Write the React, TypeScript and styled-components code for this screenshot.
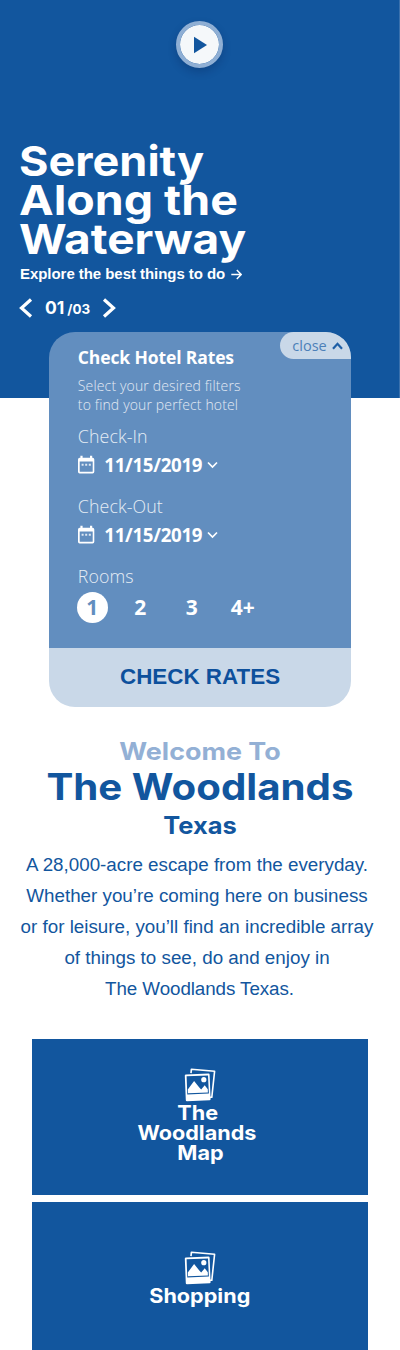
import React from "react";
import styled, { createGlobalStyle } from "styled-components";

const blue = "#12569e";
const mid = "#628ebf";
const pale = "#c9d8e8";
const display = `"Inter", "Liberation Sans", sans-serif`;
const humanist = `"Open Sans", "Noto Sans", sans-serif`;
const grotesque = `"Liberation Sans", Arial, sans-serif`;

const GlobalStyle = createGlobalStyle`
  * { box-sizing: border-box; }
  body { margin: 0; background: #fff; }
  button { border: 0; padding: 0; background: none; font: inherit; color: inherit; }
  svg { display: block; flex: none; }
`;

const Page = styled.main`
  width: 400px;
  height: 1350px;
  overflow: hidden;
  background: #fff;
`;

const Hero = styled.section`
  height: 398px;
  padding: 21px 0 0 19px;
  background: ${blue};
  border-right: 1px solid #3a71ad;
  color: #fff;
`;

const PlayButton = styled.button`
  display: flex;
  align-items: center;
  justify-content: center;
  width: 47px;
  height: 47px;
  margin: 0 0 0 157.3px;
  border: 4px solid #8fafd4;
  border-radius: 50%;
  background: #f5f8fa;
  background-clip: padding-box;
  box-shadow: 0 4px 9px rgba(0, 20, 60, 0.22);
`;

const HeroTitle = styled.h1`
  margin: 74px 0 0;
  font: 700 41.5px/39px ${display};
`;

const Line = styled.span<{ $stretch?: number; $from?: string }>`
  display: block;
  white-space: nowrap;
  transform: ${(p) => (p.$stretch ? `scaleX(${p.$stretch})` : "none")};
  transform-origin: ${(p) => p.$from ?? "center"};
`;

const HeroLink = styled.a`
  display: flex;
  align-items: center;
  gap: 6px;
  margin-top: 5px;
  padding-left: 1px;
  font: 700 15px/20px ${grotesque};
  letter-spacing: -0.05px;
`;

const Pager = styled.nav`
  display: flex;
  align-items: center;
  height: 24px;
  margin-top: 12px;
`;

const PageNow = styled.span`
  margin-left: 12px;
  font: 700 17.5px/24px ${display};
`;

const PageTotal = styled.span`
  margin: 1px 12px 0 3px;
  font: 700 13.4px/24px ${display};
`;

const RatesCard = styled.section`
  display: flex;
  flex-direction: column;
  position: relative;
  width: 301.5px;
  height: 375px;
  margin: -66.5px 0 0 49.3px;
  color: #fff;
`;

const CardBody = styled.div`
  height: 316.5px;
  padding: 15px 0 0 28.5px;
  border-radius: 26px 26px 0 0;
  background: ${mid};
`;

const CloseTab = styled.button`
  position: absolute;
  top: 0;
  right: 0;
  display: flex;
  align-items: center;
  gap: 5px;
  width: 70.5px;
  height: 27.5px;
  padding: 2px 0 0 12px;
  border-radius: 14px 26px 0 14px;
  background: ${pale};
  color: #4c80b8;
  font: 400 14.5px/26px ${humanist};
`;

const CardTitle = styled.h2`
  margin: 0;
  font: 700 17.5px/20px ${humanist};
  letter-spacing: -0.12px;
`;

const CardHint = styled.p`
  margin: 9px 0 0;
  color: #e2eaf4;
  font: 300 14px/19px ${humanist};
  letter-spacing: 0.15px;
`;

const Field = styled.div<{ $top: number }>`
  margin-top: ${(p) => p.$top}px;
`;

const Label = styled.div`
  color: #e6edf5;
  font: 300 17.8px/24px ${humanist};
  letter-spacing: 0.1px;
`;

const DateRow = styled.button`
  display: flex;
  align-items: center;
  height: 24px;
  margin-top: 5px;
`;

const DateText = styled.span`
  margin: 0 5px 0 9.5px;
  font: 700 18.7px/24px ${humanist};
  letter-spacing: -0.3px;
`;

const RoomRow = styled.div`
  display: flex;
  align-items: center;
  height: 31px;
  margin: 4px 0 0 -1px;
`;

const Room = styled.button<{ $active?: boolean; $width: number }>`
  width: ${(p) => p.$width}px;
  height: 31px;
  border-radius: 16px;
  background: ${(p) => (p.$active ? "#fff" : "transparent")};
  color: ${(p) => (p.$active ? mid : "#fff")};
  font: 700 21px/31px ${humanist};
  text-align: center;
`;

const CheckButton = styled.button`
  flex: 1;
  border-radius: 0 0 26px 26px;
  background: ${pale};
  color: #0d509c;
  font: 700 22.4px/58px ${grotesque};
`;

const Intro = styled.section`
  padding-top: 31px;
  text-align: center;
  color: ${blue};
`;

const Welcome = styled.div`
  color: #93b0d5;
  font: 700 24px/28px ${display};
`;

const Place = styled.h2`
  margin: 0;
  font: 700 36.6px/43px ${display};
`;

const State = styled.div`
  margin-top: 2px;
  font: 700 24px/30px ${display};
`;

const Copy = styled.p`
  margin: 8px 6px 0 0;
  font: 400 18.8px/31.2px ${grotesque};
`;

const LastLine = styled(Line)`
  padding-left: 5px;
  letter-spacing: -0.08px;
`;

const Tiles = styled.section`
  display: flex;
  flex-direction: column;
  gap: 7px;
  margin: 34px 32.3px 0;
`;

const Tile = styled.a<{ $top: number }>`
  display: flex;
  flex-direction: column;
  align-items: center;
  height: 156px;
  padding-top: ${(p) => p.$top}px;
  background: ${blue};
  color: #fff;
  font: 700 20px/20px ${display};
  text-align: center;
`;

const TileWord = styled(Line)<{ $trail?: boolean }>`
  padding-right: ${(p) => (p.$trail ? 5 : 0)}px;
`;

const Chevron = ({ d, w, h, s, color = "#fff" }: { d: string; w: number; h: number; s: number; color?: string }) => (
  <svg width={w} height={h} viewBox={`0 0 ${w} ${h}`} fill="none" stroke={color} strokeWidth={s}>
    <path d={d} />
  </svg>
);

const CalendarIcon = () => (
  <svg width="17" height="19" viewBox="0 0 17 19">
    <path d="M2.4 .7h2.2v2h7.4v-2h2.2v2H14.6a1.7 1.7 0 0 1 1.7 1.7v12.4a1.7 1.7 0 0 1-1.7 1.7H1.7A1.7 1.7 0 0 1 0 16.8V4.4A1.7 1.7 0 0 1 1.7 2.7h.7zM1.7 6.6v9.7q0 .5.5.5h12q.5 0 .5-.5V6.6z" fill="#fff" fillRule="evenodd" />
    <path d="M3.6 8.7h2v2H3.6zM7.2 8.7h2v2h-2zM10.8 8.7h2v2h-2z" fill="#dfe8f2" />
  </svg>
);

const PhotosIcon = () => (
  <svg width="32" height="35" viewBox="0 0 32 35">
    <path d="M7 5.2 7.4 1.2 30.6 3.2 27.8 29.3 26 29.2" fill="none" stroke="#fff" strokeWidth="1.6" strokeLinejoin="round" />
    <path d="M2 6.4 24.6 5.4Q25.6 5.4 25.6 6.4L26.6 31Q26.6 32.2 25.6 32.2L3 33.2Q1.8 33.2 1.8 32.3L.8 7.6Q.8 6.4 2 6.4ZM2.6 8.3 3.3 26.4 24.9 25.5 24 7.4Z" fill="#fff" fillRule="evenodd" />
    <path d="M4 25.2 3.8 21.5 10.1 13 15.3 19.5 17.2 21.6 20.7 17.2 23.8 21.2 23.9 24.4Z" fill="#fff" />
    <circle cx="19.8" cy="11.7" r="2.6" fill="#fff" />
  </svg>
);

const DateField = ({ label, top }: { label: string; top: number }) => (
  <Field $top={top}>
    <Label>{label}</Label>
    <DateRow>
      <CalendarIcon />
      <DateText>11/15/2019</DateText>
      <Chevron w={11} h={8} s={1.7} d="M1 1.5 5.5 6 10 1.5" />
    </DateRow>
  </Field>
);

export default function App() {
  return (
    <Page>
      <GlobalStyle />
      <Hero>
        <PlayButton aria-label="Play">
          <svg width="15" height="18" viewBox="0 0 15 18"><path d="M2 .7 15 9 2 17.3z" fill={blue} /></svg>
        </PlayButton>
        <HeroTitle>
          <Line $stretch={1.085} $from="left">Serenity</Line>
          <Line $stretch={1.12} $from="left">Along the</Line>
          <Line $stretch={1.108} $from="left">Waterway</Line>
        </HeroTitle>
        <HeroLink>
          Explore the best things to do
          <Chevron w={11} h={11} s={1.4} d="M.3 5.5H10M5.8 1 10.2 5.5 5.8 10" />
        </HeroLink>
        <Pager>
          <Chevron w={14} h={20} s={3.2} d="M12 1.5 2.5 10 12 18.5" />
          <PageNow>01</PageNow>
          <PageTotal>/03</PageTotal>
          <Chevron w={14} h={20} s={3.2} d="M2 1.5 11.5 10 2 18.5" />
        </Pager>
      </Hero>

      <RatesCard>
        <CardBody>
          <CardTitle>Check Hotel Rates</CardTitle>
          <CardHint>
            Select your desired filters
            <br />
            to find your perfect hotel
          </CardHint>
          <DateField label="Check-In" top={10} />
          <DateField label="Check-Out" top={17} />
          <Field $top={17}>
            <Label>Rooms</Label>
            <RoomRow>
              <Room $active $width={31}>1</Room>
              <Room $width={65}>2</Room>
              <Room $width={38}>3</Room>
              <Room $width={64}>4+</Room>
            </RoomRow>
          </Field>
        </CardBody>
        <CheckButton>CHECK RATES</CheckButton>
        <CloseTab>
          close
          <Chevron w={11} h={8} s={2.2} color="#1f5fa6" d="M1 6.8 5.5 1.8 10 6.8" />
        </CloseTab>
      </RatesCard>

      <Intro>
        <Welcome><Line $stretch={1.12}>Welcome To</Line></Welcome>
        <Place><Line $stretch={1.1}>The Woodlands</Line></Place>
        <State><Line $stretch={1.06}>Texas</Line></State>
        <Copy>
          <Line>A 28,000-acre escape from the everyday.</Line>
          <Line>Whether you’re coming here on business</Line>
          <Line>or for leisure, you’ll find an incredible array</Line>
          <Line>of things to see, do and enjoy in</Line>
          <LastLine>The Woodlands Texas.</LastLine>
        </Copy>
      </Intro>

      <Tiles>
        <Tile $top={29}>
          <PhotosIcon />
          <TileWord $stretch={1.08} $trail>The</TileWord>
          <TileWord $stretch={1.08} $trail>Woodlands</TileWord>
          <TileWord $stretch={1.08}>Map</TileWord>
        </Tile>
        <Tile $top={49}>
          <PhotosIcon />
          <TileWord $stretch={1.08}>Shopping</TileWord>
        </Tile>
      </Tiles>
    </Page>
  );
}
